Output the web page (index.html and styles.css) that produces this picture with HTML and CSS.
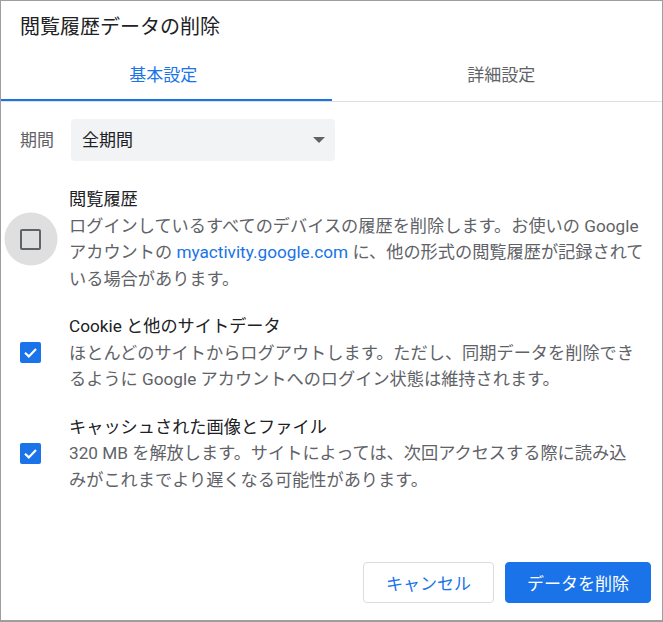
FILE: index.html
```html
<!DOCTYPE html>
<html lang="ja">
<head>
<meta charset="utf-8">
<title>閲覧履歴データの削除</title>
<link rel="stylesheet" href="styles.css">
</head>
<body>
<div class="dialog">
  <h1 class="title">閲覧履歴データの削除</h1>
  <div class="tabs">
    <div class="tab tab-first active">基本設定</div>
    <div class="tab tab-second">詳細設定</div>
  </div>
  <div class="content">
    <div class="period">
      <span class="period-label">期間</span>
      <div class="select">
        <span class="select-value">全期間</span>
        <span class="arrow"></span>
      </div>
    </div>
    <div class="options">
      <div class="option">
        <div class="cb-wrap">
          <span class="ripple"></span>
          <span class="cb"></span>
        </div>
        <div class="opt-text">
          <div class="opt-title">閲覧履歴</div>
          <div class="desc">ログインしているすべてのデバイスの履歴を削除します。お使いの Google<br>アカウントの <span class="link">myactivity.google.com</span> に、他の形式の閲覧履歴が記録されて<br>いる場合があります。</div>
        </div>
      </div>
      <div class="option">
        <div class="cb-wrap">
          <span class="cb checked"><svg viewBox="0 0 21 21" width="21" height="21"><path d="M5 10.8 L8.8 14.4 L16 7" fill="none" stroke="#fff" stroke-width="2.2"/></svg></span>
        </div>
        <div class="opt-text">
          <div class="opt-title">Cookie と他のサイトデータ</div>
          <div class="desc">ほとんどのサイトからログアウトします。ただし、同期データを削除でき<br>るように Google アカウントへのログイン状態は維持されます。</div>
        </div>
      </div>
      <div class="option">
        <div class="cb-wrap">
          <span class="cb checked"><svg viewBox="0 0 21 21" width="21" height="21"><path d="M5 10.8 L8.8 14.4 L16 7" fill="none" stroke="#fff" stroke-width="2.2"/></svg></span>
        </div>
        <div class="opt-text">
          <div class="opt-title">キャッシュされた画像とファイル</div>
          <div class="desc">320 MB を解放します。サイトによっては、次回アクセスする際に読み込<br>みがこれまでより遅くなる可能性があります。</div>
        </div>
      </div>
    </div>
  </div>
  <div class="footer">
    <button class="btn cancel">キャンセル</button>
    <button class="btn primary">データを削除</button>
  </div>
</div>
</body>
</html>
```
FILE: styles.css
```css
html, body {
  margin: 0;
  padding: 0;
  background: #ffffff;
}

body {
  font-family: Roboto, "Noto Sans CJK JP", sans-serif;
  color: #202124;
}

.dialog {
  box-sizing: border-box;
  width: 663px;
  height: 622px;
  border: 1px solid #9e9e9e;
  border-bottom-width: 2px;
  display: flex;
  flex-direction: column;
  background: #fff;
}

.title {
  margin: 0;
  padding: 14px 20px 0 19px;
  font-size: 20px;
  line-height: 24px;
  font-weight: 400;
  color: #202124;
}

.tabs {
  display: flex;
  border-bottom: 1px solid #e0e0e0;
}

.tab {
  box-sizing: border-box;
  width: 50%;
  text-align: center;
  font-size: 17px;
  line-height: 24px;
  padding: 24px 0 12px;
  border-bottom: 2px solid transparent;
  color: #5f6368;
}

.tab-first {
  padding-right: 6px;
}

.tab-second {
  padding-left: 9px;
}

.tab.active {
  color: #1a73e8;
  border-bottom-color: #1a73e8;
}

.content {
  padding: 0 19px;
}

.period {
  display: flex;
  align-items: center;
  margin-top: 17px;
}

.period-label {
  width: 51px;
  font-size: 17px;
  color: #5f6368;
  margin-top: -4px;
}

.select {
  box-sizing: border-box;
  width: 264px;
  height: 42px;
  background: #f1f3f4;
  border-radius: 4px;
  padding: 0 10px 0 11px;
  display: flex;
  align-items: center;
  justify-content: space-between;
}

.select-value {
  font-size: 17px;
  color: #202124;
  margin-top: -3px;
}

.arrow {
  width: 0;
  height: 0;
  border-left: 6px solid transparent;
  border-right: 6px solid transparent;
  border-top: 6px solid #5f6368;
}

.options {
  margin-top: 25px;
  display: flex;
  flex-direction: column;
  gap: 21px;
}

.option {
  display: flex;
  align-items: center;
}

.cb-wrap {
  position: relative;
  width: 21px;
  height: 21px;
  flex: none;
  margin-right: 28px;
}

.ripple {
  position: absolute;
  left: 50%;
  top: 50%;
  width: 53px;
  height: 53px;
  transform: translate(-50%, -50%);
  border-radius: 50%;
  background: #dfdfdf;
}

.cb {
  position: relative;
  display: block;
  box-sizing: border-box;
  width: 21px;
  height: 21px;
  border: 2px solid #5f6368;
  border-radius: 2px;
}

.cb.checked {
  border: none;
  background: #1a73e8;
}

.cb svg {
  display: block;
}

.opt-text {
  font-size: 17.2px;
  line-height: 26.5px;
  white-space: nowrap;
}

.opt-title {
  color: #202124;
}

.desc {
  color: #5f6368;
}

.link {
  color: #1a73e8;
}

.footer {
  margin-top: auto;
  display: flex;
  justify-content: flex-end;
  gap: 11px;
  padding: 0 11px 17px 0;
}

.btn {
  box-sizing: border-box;
  height: 41px;
  font-family: Roboto, "Noto Sans CJK JP", sans-serif;
  font-size: 17px;
  border-radius: 4px;
  cursor: pointer;
}

.btn.cancel {
  background: #fff;
  border: 1px solid #dadce0;
  color: #1a73e8;
  padding: 0 22px;
}

.btn.primary {
  background: #1a73e8;
  border: 1px solid #1a73e8;
  color: #fff;
  padding: 0 21px;
}
```
